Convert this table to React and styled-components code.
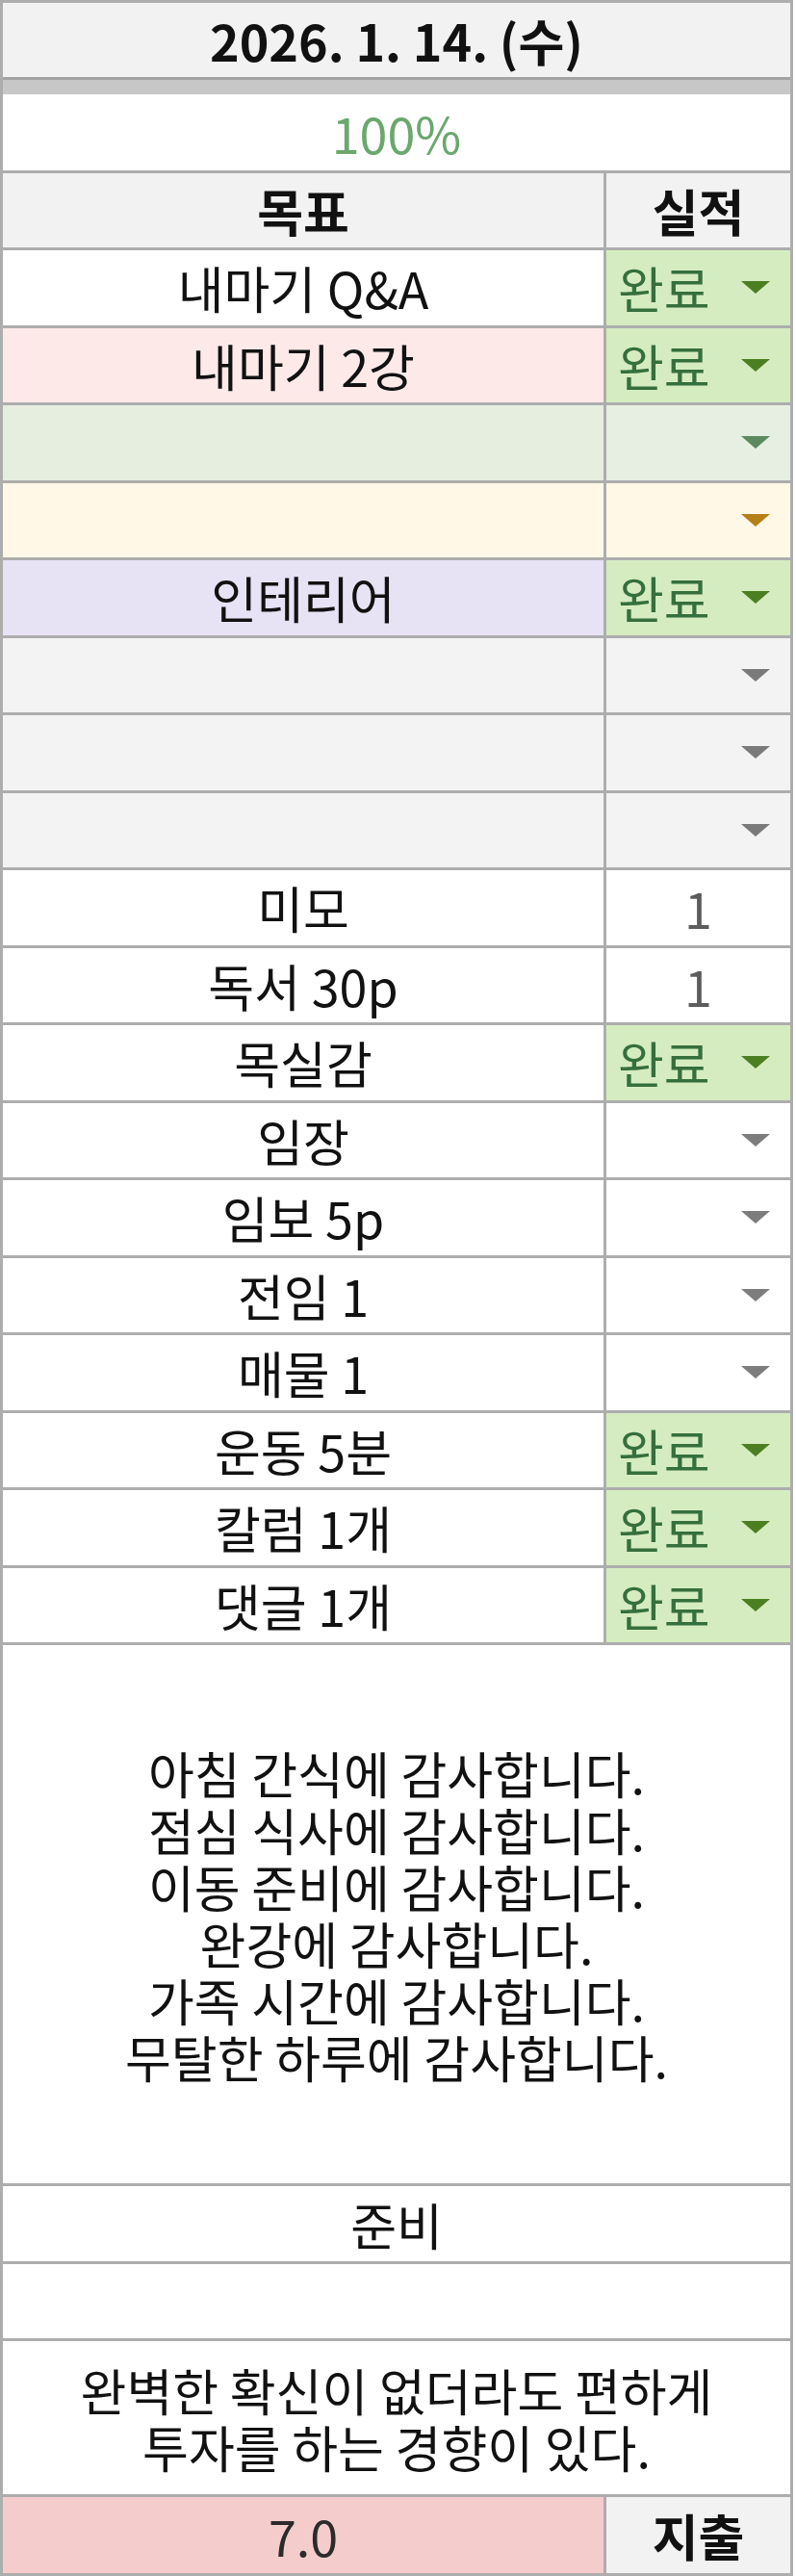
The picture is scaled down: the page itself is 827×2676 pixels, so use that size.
import React from 'react';
import styled, { createGlobalStyle } from 'styled-components';

const GlobalStyle = createGlobalStyle`
  html, body {
    margin: 0;
    padding: 0;
    background: #ffffff;
  }
  body {
    font-family: "Malgun Gothic", "Noto Sans CJK KR", "Noto Sans", sans-serif;
    color: #111111;
  }
`;

const LINE = '#adadad';

const Sheet = styled.div`
  width: 824px;
  box-sizing: border-box;
  border: 3px solid ${LINE};
  font-size: 52px;
`;

const DateRow = styled.div`
  height: 77px;
  display: flex;
  align-items: center;
  justify-content: center;
  background: #f2f2f2;
  font-weight: 700;
`;

const Band = styled.div`
  height: 18px;
  box-sizing: border-box;
  border-top: 3px solid #a3a3a3;
  background: #c7c7c7;
`;

const Row = styled.div`
  display: grid;
  grid-template-columns: 627px 1fr;
  height: ${p => p.$h || 80.5}px;
  box-sizing: border-box;
  border-bottom: ${p => (p.$last ? 'none' : `3px solid ${LINE}`)};
`;

const FullRow = styled.div`
  height: ${p => p.$h}px;
  box-sizing: border-box;
  border-bottom: 3px solid ${LINE};
  display: flex;
  align-items: center;
  justify-content: center;
  text-align: center;
  color: ${p => p.$color || '#111111'};
`;

const Lines = styled.div`
  line-height: 59px;
`;

const Goal = styled.div`
  box-sizing: border-box;
  border-right: 3px solid ${LINE};
  background: ${p => p.$bg || '#ffffff'};
  display: flex;
  align-items: center;
  justify-content: center;
  font-weight: ${p => (p.$bold ? 700 : 400)};
  color: ${p => p.$color || '#111111'};
`;

const Result = styled.div`
  background: ${p => p.$bg || '#ffffff'};
  display: flex;
  align-items: center;
  justify-content: ${p => (p.$center ? 'center' : 'space-between')};
  padding: ${p => (p.$center ? '0' : '0 21px 0 12px')};
  font-weight: ${p => (p.$bold ? 700 : 400)};
  color: ${p => p.$color || '#111111'};
`;

const Arrow = styled.span`
  width: 0;
  height: 0;
  margin-left: auto;
  border-left: 15px solid transparent;
  border-right: 15px solid transparent;
  border-top: 13px solid ${p => p.$color};
`;

const tones = {
  done: { bg: '#d5ecc0', text: '#356f3d', arrow: '#4b7f22' },
  green: { bg: '#e6efe1', text: '#356f3d', arrow: '#5b8a5e' },
  yellow: { bg: '#fff8e7', text: '#8a6212', arrow: '#b67f17' },
  gray: { bg: '#f3f3f3', text: '#555555', arrow: '#7a7a7a' },
  white: { bg: '#ffffff', text: '#555555', arrow: '#7d7d7d' },
};

const rows = [
  { goal: '내마기 Q&A', status: 'done' },
  { goal: '내마기 2강', bg: '#fce9e8', status: 'done' },
  { goal: '', bg: '#e5eedf', status: 'green' },
  { goal: '', bg: '#fff8e7', status: 'yellow' },
  { goal: '인테리어', bg: '#e7e2f4', status: 'done' },
  { goal: '', bg: '#f3f3f3', status: 'gray' },
  { goal: '', bg: '#f3f3f3', status: 'gray' },
  { goal: '', bg: '#f3f3f3', status: 'gray' },
  { goal: '미모', value: '1' },
  { goal: '독서 30p', value: '1' },
  { goal: '목실감', status: 'done' },
  { goal: '임장', status: 'white' },
  { goal: '임보 5p', status: 'white' },
  { goal: '전임 1', status: 'white' },
  { goal: '매물 1', status: 'white' },
  { goal: '운동 5분', status: 'done' },
  { goal: '칼럼 1개', status: 'done' },
  { goal: '댓글 1개', status: 'done' },
];

const thanks = [
  '아침 간식에 감사합니다.',
  '점심 식사에 감사합니다.',
  '이동 준비에 감사합니다.',
  '완강에 감사합니다.',
  '가족 시간에 감사합니다.',
  '무탈한 하루에 감사합니다.',
];

function StatusCell({ status, value }) {
  if (value) {
    return (
      <Result $center $color="#5c5c5c">
        {value}
      </Result>
    );
  }
  const t = tones[status];
  return (
    <Result $bg={t.bg} $color={t.text}>
      {status === 'done' ? '완료' : ''}
      <Arrow $color={t.arrow} />
    </Result>
  );
}

export default function App() {
  return (
    <>
      <GlobalStyle />
      <Sheet>
        <DateRow>2026. 1. 14. (수)</DateRow>
        <Band />
        <FullRow $h={82} $color="#6aa86e">100%</FullRow>
        <Row $h={80}>
          <Goal $bg="#f2f2f2" $bold>목표</Goal>
          <Result $bg="#f2f2f2" $center $bold>실적</Result>
        </Row>
        {rows.map((r, i) => (
          <Row key={i}>
            <Goal $bg={r.bg}>{r.goal}</Goal>
            <StatusCell status={r.status} value={r.value} />
          </Row>
        ))}
        <FullRow $h={562}>
          <Lines>
            {thanks.map(line => (
              <div key={line}>{line}</div>
            ))}
          </Lines>
        </FullRow>
        <FullRow $h={81}>준비</FullRow>
        <FullRow $h={80} />
        <FullRow $h={162}>
          <Lines>
            <div>완벽한 확신이 없더라도 편하게</div>
            <div>투자를 하는 경향이 있다.</div>
          </Lines>
        </FullRow>
        <Row $h={79} $last>
          <Goal $bg="#f4cccc" $color="#2b2b2b">7.0</Goal>
          <Result $bg="#f2f2f2" $center $bold>지출</Result>
        </Row>
      </Sheet>
    </>
  );
}
